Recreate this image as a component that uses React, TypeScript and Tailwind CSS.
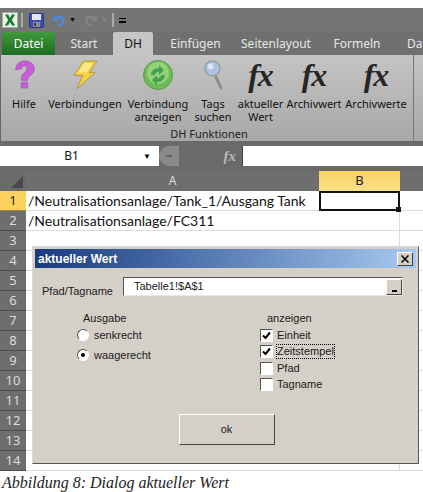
const tabs = [
  { label: 'Start', w: 'w-[58px]' },
  { label: 'DH', w: 'w-[40px]', active: true },
  { label: 'Einfügen', w: 'w-[85px]' },
  { label: 'Seitenlayout', w: 'w-[76px]' },
  { label: 'Formeln', w: 'w-[86px]' },
  { label: 'Daten', w: 'w-[48px]' },
];

function ExcelLogo() {
  return (
    <svg width="16" height="16" viewBox="0 0 16 16">
      <rect x="0.5" y="0.5" width="15" height="15" fill="#e8f2e4" stroke="#9db59a" />
      <path d="M3 2.5h3.2L8 6l1.8-3.5H13L9.8 8l3.4 5.6H9.900L8 10l-1.900 3.600H2.800L6.200 8z" fill="#1c7a35" />
    </svg>
  );
}

function SaveIcon() {
  return (
    <svg width="15" height="15" viewBox="0 0 15 15">
      <rect x="0.5" y="0.5" width="14" height="14" rx="1" fill="#3f4fb8" stroke="#2b3480" />
      <rect x="3" y="1" width="9" height="6" fill="#e4e8f4" />
      <rect x="4" y="9" width="7" height="5" fill="#8d8d96" />
      <rect x="5" y="10" width="2" height="3" fill="#34345a" />
    </svg>
  );
}

function UndoIcon({ muted }: { muted?: boolean }) {
  const color = muted ? '#858585' : '#4a8ad8';
  return (
    <svg width="14" height="15" viewBox="0 0 15 15" fill="none" className={muted ? '-scale-x-100' : ''}>
      <path d="M3 6.500C5 2.500 12 3 12.500 7.500c.3 2.700-2 5-5 5.500" stroke={color} strokeWidth="2.600" />
      <path d="M1 2v6h6z" fill={color} />
    </svg>
  );
}

function HelpIcon() {
  return (
    <svg width="21" height="29" viewBox="0 0 26 30" preserveAspectRatio="none">
      <path d="M2 10C3 3 8 1 13 1c7 0 12 3 12 8 0 4-3 6-6 8-2 1-2 2-2 4H9c0-4 1-6 4-8 2-1 3-3 3-4 0-2-1-3-3-3s-3 1-3.500 3z" fill="#c55fd6" stroke="#9a45ad" strokeWidth="0.700" />
      <rect x="9" y="23" width="8" height="6" rx="1" fill="#c55fd6" stroke="#9a45ad" strokeWidth="0.700" />
    </svg>
  );
}

function BoltIcon() {
  return (
    <svg width="25" height="30" viewBox="0 0 26 31">
      <path d="M11 1h14l-8 12h6L4 30l6-14H1z" fill="#f3cf45" stroke="#a88a32" strokeWidth="0.800" />
      <path d="M12 3h9l-7 10H5z" fill="#fbe88e" />
    </svg>
  );
}

function RefreshIcon() {
  return (
    <svg width="30" height="30" viewBox="0 0 30 30">
      <circle cx="15" cy="15" r="14.500" fill="#6dbb55" stroke="#5a9a4a" />
      <circle cx="15" cy="13" r="11" fill="#93d276" />
      <path d="M8 15c0-4 3-7 8-7V5l5 5-5 5v-3c-3 0-4 1-4 3z" fill="#45a052" />
      <path d="M22 15c0 4-3 7-8 7v3l-5-5 5-5v3c3 0 4-1 4-3z" fill="#45a052" />
    </svg>
  );
}

function SearchIcon() {
  return (
    <svg width="19" height="30" viewBox="0 0 19 30" fill="none">
      <path d="M11 15l6 13" stroke="#8e8e8e" strokeWidth="3" strokeLinecap="round" />
      <circle cx="8.500" cy="8.500" r="7.500" fill="#a9c3e2" stroke="#9a9a9a" strokeWidth="1.500" />
      <circle cx="6.500" cy="6.500" r="3" fill="#dce8f5" />
    </svg>
  );
}

function Fx({ small }: { small?: boolean }) {
  return (
    <span className={small
      ? "font-['Liberation_Serif',serif] text-[15px] font-bold italic leading-none text-[#b8b8b8]"
      : "font-['Liberation_Serif',serif] text-[32px] font-bold italic leading-none tracking-[-1px] text-[#262626]"}>
      fx
    </span>
  );
}

function RibbonItem({ w, icon, label, sub }: { w: string; icon: React.ReactNode; label: string; sub?: string }) {
  return (
    <div className={`${w} flex shrink-0 flex-col items-center text-center`}>
      <div className="flex h-[35px] items-center justify-center">{icon}</div>
      <div className="mt-[5px] whitespace-nowrap text-[11px] leading-[13px] text-[#111]">{label}</div>
      {sub && <div className="whitespace-nowrap text-[11px] leading-[13px] text-[#111]">{sub}</div>}
    </div>
  );
}

function RowHeader({ n, active }: { n: number; active?: boolean }) {
  return (
    <div className={active
      ? 'flex h-[20px] w-[26px] shrink-0 items-center justify-center border-b border-[#a8883c] bg-[#fbd25e] text-[13px] text-[#222]'
      : 'flex h-[20px] w-[26px] shrink-0 items-center justify-center border-b border-[#4a4a4a] bg-[#6e6e6e] text-[13px] text-[#dcdcdc]'}>
      {n}
    </div>
  );
}

function Row({ n, text, selected }: { n: number; text?: string; selected?: boolean }) {
  return (
    <div className="flex h-[20px]">
      <RowHeader n={n} active={selected} />
      <div className="w-[293px] shrink-0 overflow-visible whitespace-nowrap border-b border-[#dcdcdc] pl-[2px] font-['Lato',sans-serif] text-[14px] leading-[19px] text-[#111]">
        {text}
      </div>
      <div className={selected
        ? 'relative w-[81px] shrink-0 border-2 border-[#111]'
        : 'w-[81px] shrink-0 border-b border-r border-[#dcdcdc]'}>
        {selected && <div className="absolute -bottom-[3px] -right-[3px] h-[5px] w-[5px] bg-[#111]" />}
      </div>
      <div className="flex-1 border-b border-[#dcdcdc]" />
    </div>
  );
}

function Radio({ label, checked }: { label: string; checked?: boolean }) {
  return (
    <div className="flex h-[20px] items-center gap-[5px]">
      <span className="flex h-[12px] w-[12px] items-center justify-center rounded-full border border-[#555] border-b-white border-r-white bg-white">
        {checked && <span className="h-[4px] w-[4px] rounded-full bg-black" />}
      </span>
      <span>{label}</span>
    </div>
  );
}

function Check({ label, checked, focused }: { label: string; checked?: boolean; focused?: boolean }) {
  return (
    <div className="flex h-[16.500px] items-center gap-[3px]">
      <span className="flex h-[13px] w-[13px] items-center justify-center border border-[#555] border-b-white border-r-white bg-white">
        {checked && (
          <svg width="9" height="9" viewBox="0 0 9 9" fill="none">
            <path d="M1 4.500l2.500 2.500L8 1.500" stroke="#000" strokeWidth="2" />
          </svg>
        )}
      </span>
      <span className={focused ? 'border border-dotted border-black leading-[13px]' : 'border border-transparent leading-[13px]'}>{label}</span>
    </div>
  );
}

function Dialog() {
  return (
    <div className="absolute left-[32px] top-[246px] h-[218px] w-[387px] border border-[#555] border-l-[#d8d8d8] border-t-[#d8d8d8] bg-[#d4d0c8] p-[2px] font-['Liberation_Sans',sans-serif] text-[11px] text-[#1a1a1a]">
      <div className="flex h-[19px] items-center justify-between bg-gradient-to-r from-[#1a3a80] to-[#a6caf0] pl-[3px] pr-[3px]">
        <span className="text-[12px] font-bold text-white">aktueller Wert</span>
        <span className="flex h-[14px] w-[16px] items-center justify-center border border-[#444] border-l-white border-t-white bg-[#d4d0c8]">
          <svg width="8" height="8" viewBox="0 0 8 8" fill="none">
            <path d="M0.500 0.500l7 7M7.500 0.500l-7 7" stroke="#000" strokeWidth="1.500" />
          </svg>
        </span>
      </div>
      <div className="mt-[9px] flex items-start">
        <span className="ml-[7px] mt-[7px] w-[81px] text-[11px] leading-[14px]">Pfad/Tagname</span>
        <div className="flex h-[19px] w-[280px] items-center justify-between border border-[#555] border-b-[#e8e8e8] border-r-[#e8e8e8] bg-white pl-[10px]">
          <span className="text-[11px]">Tabelle1!$A$1</span>
          <span className="flex h-[16px] w-[16px] items-end justify-center border border-[#444] border-l-white border-t-white bg-[#d4d0c8] pb-[2px]">
            <span className="h-[2px] w-[5px] bg-black" />
          </span>
        </div>
      </div>
      <div className="mt-[12px] flex">
        <div className="ml-[42px] w-[183px]">
          <div className="ml-[6px] h-[15px] text-[11px]">Ausgabe</div>
          <Radio label="senkrecht" />
          <Radio label="waagerecht" checked />
        </div>
        <div>
          <div className="ml-[7px] h-[17px] text-[11px]">anzeigen</div>
          <Check label="Einheit" checked />
          <Check label="Zeitstempel" checked focused />
          <Check label="Pfad" />
          <Check label="Tagname" />
        </div>
      </div>
      <div className="mt-[21px] flex justify-center pl-[2px]">
        <div className="flex h-[31px] w-[96px] items-center justify-center border border-[#444] border-l-white border-t-white text-[11px]">ok</div>
      </div>
    </div>
  );
}

export default function App() {
  return (
    <div className="relative h-[492px] w-[423px] overflow-hidden bg-white font-['Noto_Sans',sans-serif]">
      <div className="h-[8px]" />
      <div className="flex h-[24px] items-center bg-[#757575] pl-[2px]">
        <ExcelLogo />
        <div className="ml-[3px] h-[14px] w-[2px] bg-[#aaa]" />
        <div className="ml-[6px]"><SaveIcon /></div>
        <div className="ml-[8px]"><UndoIcon /></div>
        <span className="ml-[3px] text-[7px] text-black">▼</span>
        <div className="ml-[8px]"><UndoIcon muted /></div>
        <span className="ml-[3px] text-[7px] text-[#888]">▼</span>
        <div className="ml-[4px] h-[14px] w-[2px] bg-[#aaa]" />
        <div className="ml-[5px] flex flex-col gap-[2px]">
          <span className="h-[1px] w-[7px] bg-black" />
          <span className="h-[2px] w-[7px] bg-black" />
        </div>
      </div>
      <div className="flex h-[23px] items-end overflow-hidden bg-[#707070] pl-[2px] text-[12px]">
        <div className="flex h-[23px] w-[53px] shrink-0 items-center justify-center rounded-t-[2px] bg-gradient-to-b from-[#3f9a3c] to-[#1f6c22] text-white">Datei</div>
        {tabs.map((t) => (
          <div
            key={t.label}
            className={t.active
              ? `${t.w} flex h-[23px] shrink-0 items-center justify-center rounded-t-[2px] bg-[#c6c6c6] text-[#111]`
              : `${t.w} flex h-[23px] shrink-0 items-center justify-center text-[#e6e6e6]`}
          >
            {t.label}
          </div>
        ))}
      </div>
      <div className="h-[86px] border-l border-[#666] bg-gradient-to-b from-[#c4c4c4] to-[#a8a8a8]">
        <div className="flex h-[86px] w-[413px] flex-col border-r border-[#777] pl-[4px]">
          <div className="flex h-[72px] pt-[2px]">
            <RibbonItem w="w-[38px]" icon={<HelpIcon />} label="Hilfe" />
            <RibbonItem w="w-[84px]" icon={<BoltIcon />} label="Verbindungen" />
            <RibbonItem w="w-[62px]" icon={<RefreshIcon />} label="Verbindung" sub="anzeigen" />
            <RibbonItem w="w-[48px]" icon={<SearchIcon />} label="Tags" sub="suchen" />
            <RibbonItem w="w-[47px]" icon={<Fx />} label="aktueller" sub="Wert" />
            <RibbonItem w="w-[60px]" icon={<Fx />} label="Archivwert" />
            <RibbonItem w="w-[64px]" icon={<Fx />} label="Archivwerte" />
          </div>
          <div className="text-center text-[11px] leading-[13px] text-[#222]">DH Funktionen</div>
        </div>
      </div>
      <div className="h-[5px] bg-[#6a6a6a]" />
      <div className="flex h-[20px] bg-[#6a6a6a]">
        <div className="flex w-[159px] items-center bg-white">
          <span className="w-[143px] text-center text-[12px] text-[#111]">B1</span>
          <span className="text-[8px] text-black">▼</span>
        </div>
        <div className="flex h-[20px] w-[20px] items-center justify-center rounded-l-full bg-[#8a8a8a]">
          <span className="h-[2px] w-[6px] bg-[#666]" />
        </div>
        <div className="flex w-[64px] items-center justify-end border-r border-[#444] pr-[6px]">
          <Fx small />
        </div>
        <div className="flex-1 bg-white" />
      </div>
      <div className="h-[5px] bg-[#6a6a6a]" />
      <div className="flex h-[20px]">
        <div className="relative w-[26px] shrink-0 bg-[#6a6a6a]">
          <div className="absolute bottom-[3px] right-[3px] h-0 w-0 border-b-[12px] border-l-[12px] border-b-[#4a4a4a] border-l-transparent" />
        </div>
        <div className="flex w-[293px] shrink-0 items-center justify-center bg-[#6e6e6e] text-[12px] text-[#dcdcdc]">A</div>
        <div className="flex w-[81px] shrink-0 items-center justify-center bg-gradient-to-b from-[#fbd25e] to-[#f8e08a] text-[13px] text-[#222]">B</div>
        <div className="flex-1 bg-[#6e6e6e]" />
      </div>
      <Row n={1} text="/Neutralisationsanlage/Tank_1/Ausgang Tank" selected />
      <Row n={2} text="/Neutralisationsanlage/FC311" />
      {[3, 4, 5, 6, 7, 8, 9, 10, 11, 12, 13, 14].map((n) => (
        <Row key={n} n={n} />
      ))}
      <div className="whitespace-nowrap pl-[2px] pt-[2px] font-['Liberation_Serif',serif] text-[16px] italic leading-[19px] text-[#222]">
        Abbildung 8: Dialog aktueller Wert
      </div>
      <Dialog />
    </div>
  );
}
